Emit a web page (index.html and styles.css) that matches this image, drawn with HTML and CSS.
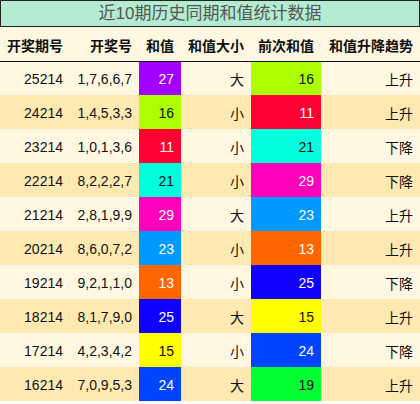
FILE: index.html
```html
<!DOCTYPE html>
<html lang="zh">
<head>
<meta charset="utf-8">
<title>近10期历史同期和值统计数据</title>
<link rel="stylesheet" href="styles.css">
</head>
<body>
<div class="panel">
  <div class="title">近10期历史同期和值统计数据</div>
  <table class="stats">
    <colgroup>
      <col class="c-issue"><col class="c-nums"><col class="c-sum"><col class="c-size"><col class="c-prev"><col class="c-trend">
    </colgroup>
    <thead>
      <tr><th>开奖期号</th><th>开奖号</th><th>和值</th><th>和值大小</th><th>前次和值</th><th>和值升降趋势</th></tr>
    </thead>
    <tbody>
      <tr><td>25214</td><td>1,7,6,6,7</td><td class="v v27">27</td><td>大</td><td class="v v16">16</td><td>上升</td></tr>
      <tr><td>24214</td><td>1,4,5,3,3</td><td class="v v16">16</td><td>小</td><td class="v v11">11</td><td>上升</td></tr>
      <tr><td>23214</td><td>1,0,1,3,6</td><td class="v v11">11</td><td>小</td><td class="v v21">21</td><td>下降</td></tr>
      <tr><td>22214</td><td>8,2,2,2,7</td><td class="v v21">21</td><td>小</td><td class="v v29">29</td><td>下降</td></tr>
      <tr><td>21214</td><td>2,8,1,9,9</td><td class="v v29">29</td><td>大</td><td class="v v23">23</td><td>上升</td></tr>
      <tr><td>20214</td><td>8,6,0,7,2</td><td class="v v23">23</td><td>小</td><td class="v v13">13</td><td>上升</td></tr>
      <tr><td>19214</td><td>9,2,1,1,0</td><td class="v v13">13</td><td>小</td><td class="v v25">25</td><td>下降</td></tr>
      <tr><td>18214</td><td>8,1,7,9,0</td><td class="v v25">25</td><td>大</td><td class="v v15">15</td><td>上升</td></tr>
      <tr><td>17214</td><td>4,2,3,4,2</td><td class="v v15">15</td><td>小</td><td class="v v24">24</td><td>下降</td></tr>
      <tr><td>16214</td><td>7,0,9,5,3</td><td class="v v24">24</td><td>大</td><td class="v v19">19</td><td>上升</td></tr>
    </tbody>
  </table>
</div>
</body>
</html>
```

FILE: styles.css
```css
html, body {
  margin: 0;
  padding: 0;
  background: #ffffff;
}
body {
  font-family: "Liberation Sans", "Noto Sans CJK SC", sans-serif;
  color: #111;
}
.panel {
  width: 420px;
}
.title {
  box-sizing: border-box;
  height: 27px;
  border: 1px solid #222;
  background: #b3ecd0;
  color: #555;
  font-size: 17px;
  line-height: 25px;
  text-align: center;
}
.stats {
  width: 420px;
  border-collapse: collapse;
  table-layout: fixed;
  font-size: 14px;
}
.c-issue { width: 70px; }
.c-nums { width: 69px; }
.c-sum { width: 42px; }
.c-size { width: 70px; }
.c-prev { width: 70px; }
.c-trend { width: 99px; }
.stats th, .stats td {
  padding: 0 7px 0 0;
  text-align: right;
  white-space: nowrap;
}
.stats th {
  height: 34px;
  padding-top: 3px;
  box-sizing: border-box;
  background: #fff7e1;
  font-weight: bold;
  border-bottom: 1px solid #111;
  color: #111;
}
.stats td {
  height: 34px;
  padding-top: 1px;
  box-sizing: border-box;
}
.stats tbody tr:nth-child(odd) { background: #fff7e1; }
.stats tbody tr:nth-child(even) { background: #ffe9b3; }
.v { color: #fff; }
.v27 { background: #a200ff; }
.v16 { background: #aaff00; color: #111; }
.v11 { background: #ff0033; }
.v21 { background: #00ffdd; color: #111; }
.v29 { background: #ff00bb; }
.v23 { background: #0099ff; }
.v13 { background: #ff6600; }
.v25 { background: #1100ff; }
.v15 { background: #ffff00; color: #111; }
.v24 { background: #0044ff; }
.v19 { background: #00ff33; color: #111; }
```
